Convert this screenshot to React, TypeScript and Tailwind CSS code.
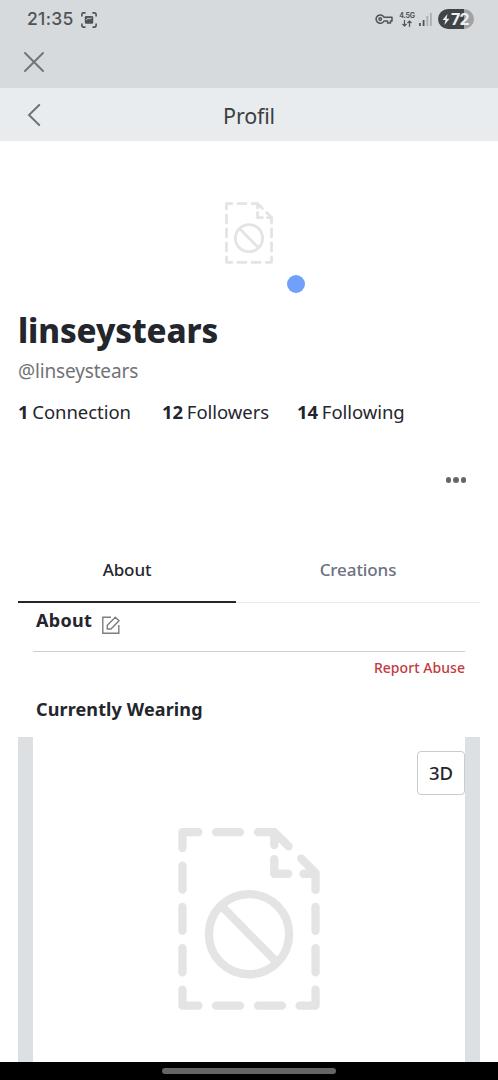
import type { ReactNode } from 'react';

const STATS = [
  { count: '1', label: 'Connection', width: 'w-[144px]' },
  { count: '12', label: 'Followers', width: 'w-[135px]' },
  { count: '14', label: 'Following', width: 'w-[120px]' },
];

function MissingImage({ className }: { className: string }) {
  return (
    <svg viewBox="39 37 426 547" className={className} fill="none" stroke="#e4e4e4" strokeWidth="25" strokeLinecap="round" strokeLinejoin="round">
      <path d="M52 97V49.5H100M153 49.5H225M279 49.5H328L371 92M328 49.5V88M328 131V174.5H370M409 129L452 172V223M416 174.5H452" />
      <path d="M52 150V222M52 274V346M52 398V471M52 523V571H100M153 571H225M279 571H351M404 571H452V523M452 471V398M452 346V274" />
      <circle cx="252" cy="356" r="120.5" />
      <path d="M170 272L335 440" />
    </svg>
  );
}

function StatusBar() {
  return (
    <div className="flex h-[38px] items-center pl-[27px] pr-[24px] text-[#505356]">
      <span className="w-[54px] font-['Inter'] text-[17.5px] font-medium leading-none tracking-[0.3px]">21:35</span>
      <svg viewBox="0 0 16 16" className="mt-px h-4 w-4" fill="none" stroke="currentColor" strokeWidth="1.6" strokeLinecap="round">
        <path d="M.9 4V2.4A1.5 1.5 0 0 1 2.4.9H4M12 .9h1.6a1.5 1.5 0 0 1 1.5 1.5V4M15.1 12v1.6a1.5 1.5 0 0 1-1.5 1.5H12M4 15.1H2.4a1.5 1.5 0 0 1-1.5-1.5V12" />
        <rect x="3.8" y="3.900" width="8.400" height="7.800" rx="1.300" fill="currentColor" stroke="none" />
        <path d="M5.600 7.400L7.200 6.200l1.200.7 1.800-1" stroke="#d6dadd" strokeWidth="1" />
      </svg>
      <svg viewBox="0 0 18 12" className="ml-auto h-3 w-[18px]" fill="none" stroke="currentColor" strokeWidth="1.5" strokeLinejoin="round">
        <path d="M9 4.200A4.200 4.200 0 1 0 9 8h3.500v2h3V8H17V4.200z" />
        <circle cx="5.200" cy="6.100" r="1.300" />
      </svg>
      <div className="ml-[6px] flex w-[16px] flex-col items-center">
        <span className="font-['Inter'] text-[7px] font-bold leading-[8px] tracking-[-0.3px]">4.5G</span>
        <svg viewBox="0 0 10 7" className="h-[7px] w-[10px]" fill="none" stroke="currentColor" strokeWidth="1.2">
          <path d="M2.500 0v6M.5 4l2 2 2-2M7.500 7V1M5.500 3l2-2 2 2" />
        </svg>
      </div>
      <svg viewBox="0 0 13 14" className="ml-[4px] h-[14px] w-[13px]">
        <path d="M0 11h1.800v3H0zM3.700 8h1.800v6h-1.800z" fill="#505356" />
        <path d="M7.400 4h1.800v10h-1.800zM11 1h1.800v13h-1.800z" fill="#aaaeb1" />
      </svg>
      <div className="ml-[6px] flex h-[20px] w-[36px] items-center rounded-full bg-linear-to-r from-[#414447] from-72% to-[#a0a3a6] to-72% pl-[4px] text-[#eceff1]">
        <svg viewBox="0 0 8 11" className="h-[11px] w-[8px]" fill="currentColor">
          <path d="M5.500 0L.5 6H3.500L2.300 11 7.500 4.700H4.500z" />
        </svg>
        <span className="ml-px font-['Inter'] text-[16px] font-bold leading-none tracking-[-0.8px]">72</span>
      </div>
    </div>
  );
}

function Tab({ active, children }: { active?: boolean; children: ReactNode }) {
  return (
    <button
      className={
        active
          ? 'flex w-[218px] justify-center border-b-2 border-[#24262d] pt-[16px] text-[#24262d]'
          : 'flex flex-1 justify-center border-b border-[#e8e9ea] pt-[16px] text-[#6d7180]'
      }
    >
      {children}
    </button>
  );
}

export default function App() {
  return (
    <div className="flex h-[1080px] w-[498px] flex-col overflow-hidden bg-white font-['Noto_Sans',sans-serif] text-[#24262d]">
      <div className="h-[88px] bg-[#d6dadd]">
        <StatusBar />
        <button className="ml-[24px] mt-[14px] block" aria-label="Close">
          <svg viewBox="0 0 20 20" className="h-5 w-5" stroke="#727476" strokeWidth="1.9" strokeLinecap="round">
            <path d="M1 1l18 18M19 1L1 19" />
          </svg>
        </button>
      </div>

      <header className="grid h-[53px] grid-cols-[60px_1fr_60px] items-center bg-[#e8ecef]">
        <button className="ml-[27px]" aria-label="Back">
          <svg viewBox="0 0 14 22" className="h-[22px] w-[14px]" fill="none" stroke="#727476" strokeWidth="2" strokeLinecap="round">
            <path d="M12.200 1L2 11l10.200 10" />
          </svg>
        </button>
        <h1 className="pt-[2px] text-center text-[21.5px] leading-none tracking-[-0.2px] text-[#3b3e41]">Profil</h1>
      </header>

      <div className="relative mx-auto flex h-[169px] w-[150px] justify-center pt-[61px]">
        <MissingImage className="h-[62px] w-[48px]" />
        <span className="absolute left-[113px] top-[134px] h-[18px] w-[18px] rounded-full bg-[#71a0fb]" />
      </div>

      <section className="h-[230px] px-[18px]">
        <h2 className="h-[43px] text-[33px] font-extrabold leading-[42px] tracking-[-0.1px]">linseystears</h2>
        <p className="h-[36px] text-[19px] leading-[36px] tracking-[-0.15px] text-[#717376]">@linseystears</p>
        <div className="flex h-[48px] items-center text-[18.5px] leading-none tracking-[-0.05px]">
          {STATS.map((s) => (
            <div key={s.label} className={`${s.width} -mt-px shrink-0 whitespace-nowrap [word-spacing:-1px]`}>
              <b>{s.count}</b> {s.label}
            </div>
          ))}
        </div>
        <button className="ml-auto mr-[14px] mt-[40px] flex gap-[2px]" aria-label="More">
          <span className="h-[5.5px] w-[5.5px] rounded-full bg-[#65676a]" />
          <span className="h-[5.5px] w-[5.5px] rounded-full bg-[#65676a]" />
          <span className="h-[5.5px] w-[5.5px] rounded-full bg-[#65676a]" />
        </button>
      </section>

      <nav className="mx-[18px] flex h-[63px] text-[17px] font-medium leading-[28px] tracking-[-0.1px]">
        <Tab active>About</Tab>
        <Tab>Creations</Tab>
      </nav>

      <section className="mx-[33px] h-[134px]">
        <div className="flex h-[49px] border-b border-[#cfd0d2] pl-[3px]">
          <h3 className="w-[66px] text-[18px] font-bold leading-[35px] tracking-[0.3px]">About</h3>
          <svg viewBox="0 0 18 18" className="mt-[13px] h-[18px] w-[18px]" fill="none" stroke="#7b7d80" strokeWidth="1.4">
            <path d="M9 1.200H.8v16h16V9M5.300 13V9.200l8-8 3.700 3.600-8 8.200z" />
          </svg>
        </div>
        <div className="h-[33px] text-right text-[14px] font-medium leading-[32px] tracking-[0.05px] text-[#c5393d]">Report Abuse</div>
        <h3 className="pl-[3px] text-[18px] font-bold leading-[49px] tracking-[0.12px]">Currently Wearing</h3>
      </section>

      <section className="relative mx-[18px] flex flex-1 justify-center border-x-[15px] border-[#dce0e3]">
        <MissingImage className="mt-[91px] h-[182px] w-[142px]" />
        <button className="absolute right-0 top-[14px] h-[44px] w-[48px] rounded-[4px] border border-[#c9cbcd] bg-white text-[18.5px] font-medium">
          3D
        </button>
      </section>

      <footer className="flex h-[18px] justify-center bg-black pt-[6px]">
        <div className="h-[5.5px] w-[174px] rounded-full bg-[#656565]" />
      </footer>
    </div>
  );
}
